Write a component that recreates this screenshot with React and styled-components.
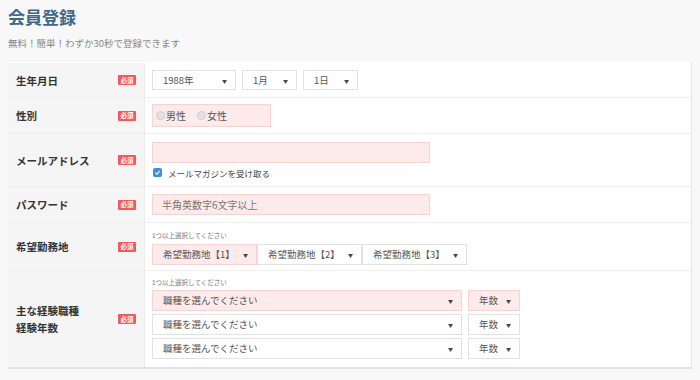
import React from 'react'
import styled, { createGlobalStyle } from 'styled-components'

const Global = createGlobalStyle`
  body {
    margin: 0;
    background: #f8f8f8;
    font-family: "Noto Sans CJK JP", "Noto Sans", sans-serif;
    color: #333;
  }
`

const Page = styled.div`
  padding: 0 8px;
`

const Title = styled.h1`
  margin: 0;
  padding-top: 3px;
  height: 27px;
  font-size: 17px;
  font-weight: 700;
  color: #3f6788;
  line-height: 27px;
`

const Lead = styled.p`
  margin: 0;
  padding-top: 6px;
  height: 32px;
  box-sizing: border-box;
  font-size: 9.5px;
  color: #888;
  line-height: 14px;
`

const Panel = styled.div`
  background: #fff;
  border-right: 1px solid #e6e6e6;
  border-bottom: 2px solid #e3e3e3;
`

const Row = styled.div`
  box-sizing: border-box;
  display: grid;
  grid-template-columns: 137px 1fr;
  height: ${p => p.$h}px;
  border-top: 1px solid ${p => (p.$first ? 'transparent' : '#eeeeee')};
`

const Label = styled.div`
  background: #f5f5f5;
  display: flex;
  align-items: center;
  justify-content: space-between;
  padding: 0 8px 0 8px;
  border-right: 1px solid #ececec;
  font-size: 10.5px;
  font-weight: 700;
  line-height: 17px;
  color: #333;
`

const Badge = styled.span`
  display: inline-flex;
  align-items: center;
  justify-content: center;
  width: 18px;
  height: 10px;
  background: #f05a5a;
  color: #fff;
  font-size: 6.5px;
  border-radius: 1px;
`

const Body = styled.div`
  display: flex;
  flex-direction: column;
  justify-content: center;
  padding: ${p => p.$pad || '0'} 0 ${p => p.$padb || '0'} 7px;
  gap: ${p => p.$gap || 0}px;
`

const Line = styled.div`
  display: flex;
  gap: ${p => p.$gap || 0}px;
  align-items: center;
`

const Select = styled.div`
  box-sizing: border-box;
  width: ${p => p.$w}px;
  height: ${p => p.$h || 20}px;
  display: flex;
  align-items: center;
  justify-content: space-between;
  padding: 0 8px 0 10px;
  background: ${p => (p.$err ? '#fdeaea' : '#fff')};
  border: 1px solid ${p => (p.$err ? '#f7d3d3' : '#e2e2e2')};
  font-size: 9.5px;
  color: #555;
  &::after {
    content: '▼';
    font-size: 5px;
    color: #444;
  }
`

const Input = styled.div`
  box-sizing: border-box;
  width: 278px;
  height: 21px;
  display: flex;
  align-items: center;
  padding: 0 9px;
  background: #fdeaea;
  border: 1px solid #f7d3d3;
  font-size: 10px;
  color: #777;
`

const RadioBox = styled.div`
  box-sizing: border-box;
  width: 119px;
  height: 23px;
  display: flex;
  align-items: center;
  gap: 11px;
  padding: 0 3px;
  background: #fdeaea;
  border: 1px solid #f7d3d3;
  font-size: 10px;
  color: #555;
`

const Radio = styled.span`
  display: inline-flex;
  align-items: center;
  &::before {
    content: '';
    width: 7px;
    height: 7px;
    border-radius: 50%;
    background: #e2e2e2;
    border: 1px solid #cfcfcf;
    margin-right: 1px;
  }
`

const Check = styled.label`
  display: flex;
  align-items: center;
  gap: 6px;
  font-size: 8.5px;
  color: #444;
  padding-left: 1px;
`

const Box = styled.span`
  width: 9px;
  height: 9px;
  border-radius: 2px;
  background: #3d8fe0;
  display: flex;
  align-items: center;
  justify-content: center;
`

const Hint = styled.div`
  font-size: 6.5px;
  color: #777;
  line-height: 9px;
`

const App = () => {
  return (
    <>
      <Global />
      <Page>
        <Title>会員登録</Title>
        <Lead>無料！簡単！わずか30秒で登録できます</Lead>
        <Panel>
          <Row $h={35} $first>
            <Label>生年月日<Badge>必須</Badge></Label>
            <Body>
              <Line $gap={6}>
                <Select $w={84}>1988年</Select>
                <Select $w={55}>1月</Select>
                <Select $w={55}>1日</Select>
              </Line>
            </Body>
          </Row>
          <Row $h={36}>
            <Label>性別<Badge>必須</Badge></Label>
            <Body>
              <RadioBox>
                <Radio>男性</Radio>
                <Radio>女性</Radio>
              </RadioBox>
            </Body>
          </Row>
          <Row $h={53}>
            <Label>メールアドレス<Badge>必須</Badge></Label>
            <Body $gap={4}>
              <Input />
              <Check>
                <Box>
                  <svg width="7" height="7" viewBox="0 0 10 10">
                    <path d="M2 5.2 L4.2 7.3 L8.2 2.8" fill="none" stroke="#fff" strokeWidth="1.6" />
                  </svg>
                </Box>
                メールマガジンを受け取る
              </Check>
            </Body>
          </Row>
          <Row $h={36}>
            <Label>パスワード<Badge>必須</Badge></Label>
            <Body>
              <Input>半角英数字6文字以上</Input>
            </Body>
          </Row>
          <Row $h={48}>
            <Label>希望勤務地<Badge>必須</Badge></Label>
            <Body $gap={4} $pad="2px">
              <Hint>1つ以上選択してください</Hint>
              <Line>
                <Select $w={105} $h={21} $err>希望勤務地【1】</Select>
                <Select $w={105} $h={21}>希望勤務地【2】</Select>
                <Select $w={105} $h={21}>希望勤務地【3】</Select>
              </Line>
            </Body>
          </Row>
          <Row $h={97}>
            <Label>
              <span>主な経験職種<br />経験年数</span>
              <Badge>必須</Badge>
            </Label>
            <Body $gap={3} $pad="0" $padb="2px">
              <Hint>1つ以上選択してください</Hint>
              <Line $gap={6}>
                <Select $w={310} $h={21} $err>職種を選んでください</Select>
                <Select $w={52} $h={21} $err>年数</Select>
              </Line>
              <Line $gap={6}>
                <Select $w={310} $h={21}>職種を選んでください</Select>
                <Select $w={52} $h={21}>年数</Select>
              </Line>
              <Line $gap={6}>
                <Select $w={310} $h={21}>職種を選んでください</Select>
                <Select $w={52} $h={21}>年数</Select>
              </Line>
            </Body>
          </Row>
        </Panel>
      </Page>
    </>
  )
}

export default App
